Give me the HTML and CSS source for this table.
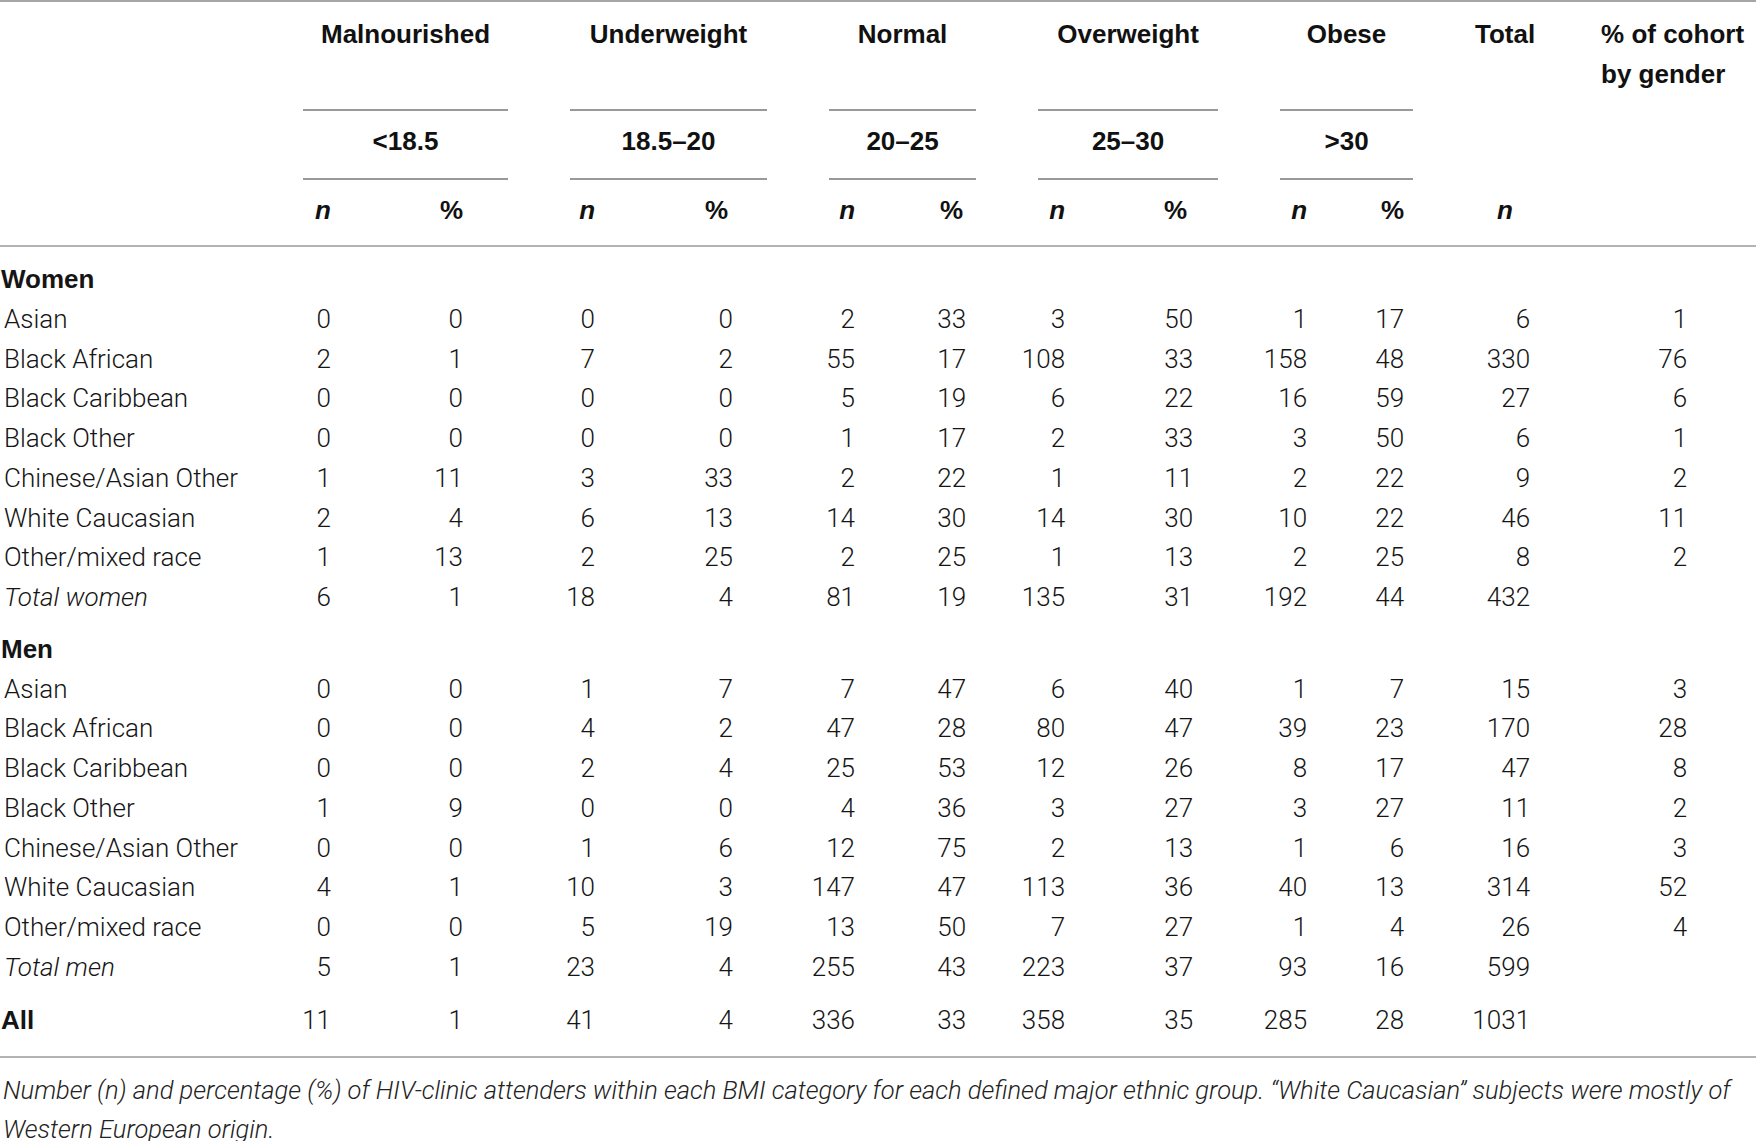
FILE: index.html
```html
<!DOCTYPE html>
<html lang="en">
  <head>
    <meta charset="UTF-8" />
    <title>BMI by ethnic group</title>
    <link rel="stylesheet" href="styles.css">
  </head>
  <body>
    <table class="bmi">
      <colgroup>
        <col class="w-label" />
        <col class="w-90" /><col class="w-177" />
        <col class="w-87" /><col class="w-172" />
        <col class="w-88" /><col class="w-121" />
        <col class="w-89" /><col class="w-153" />
        <col class="w-89" /><col class="w-106" />
        <col class="w-122" /><col class="w-190" />
      </colgroup>
      <thead>
        <tr class="cat">
          <th></th>
          <th colspan="2">Malnourished</th>
          <th colspan="2">Underweight</th>
          <th colspan="2">Normal</th>
          <th colspan="2">Overweight</th>
          <th colspan="2">Obese</th>
          <th>Total</th>
          <th class="cohort">% of cohort<br />by gender</th>
        </tr>
        <tr class="range">
          <th></th>
          <th colspan="2"><div>&lt;18.5</div></th>
          <th colspan="2"><div>18.5–20</div></th>
          <th colspan="2"><div>20–25</div></th>
          <th colspan="2"><div>25–30</div></th>
          <th colspan="2"><div>&gt;30</div></th>
          <th></th>
          <th></th>
        </tr>
        <tr class="unit">
          <th></th>
          <th class="n">n</th><th class="pc">%</th>
          <th class="n">n</th><th class="pc pc-und">%</th>
          <th class="n">n</th><th class="pc pc-norm">%</th>
          <th class="n">n</th><th class="pc pc-over">%</th>
          <th class="n">n</th><th class="pc">%</th>
          <th class="tot">n</th>
          <th></th>
        </tr>
      </thead>
      <tbody>
        <tr class="group first"><td colspan="13">Women</td></tr>
        <tr><td>Asian</td><td>0</td><td>0</td><td>0</td><td>0</td><td>2</td><td>33</td><td>3</td><td>50</td><td>1</td><td>17</td><td>6</td><td>1</td></tr>
        <tr><td>Black African</td><td>2</td><td>1</td><td>7</td><td>2</td><td>55</td><td>17</td><td>108</td><td>33</td><td>158</td><td>48</td><td>330</td><td>76</td></tr>
        <tr><td>Black Caribbean</td><td>0</td><td>0</td><td>0</td><td>0</td><td>5</td><td>19</td><td>6</td><td>22</td><td>16</td><td>59</td><td>27</td><td>6</td></tr>
        <tr><td>Black Other</td><td>0</td><td>0</td><td>0</td><td>0</td><td>1</td><td>17</td><td>2</td><td>33</td><td>3</td><td>50</td><td>6</td><td>1</td></tr>
        <tr><td>Chinese/Asian Other</td><td>1</td><td>11</td><td>3</td><td>33</td><td>2</td><td>22</td><td>1</td><td>11</td><td>2</td><td>22</td><td>9</td><td>2</td></tr>
        <tr><td>White Caucasian</td><td>2</td><td>4</td><td>6</td><td>13</td><td>14</td><td>30</td><td>14</td><td>30</td><td>10</td><td>22</td><td>46</td><td>11</td></tr>
        <tr><td>Other/mixed race</td><td>1</td><td>13</td><td>2</td><td>25</td><td>2</td><td>25</td><td>1</td><td>13</td><td>2</td><td>25</td><td>8</td><td>2</td></tr>
        <tr class="total"><td>Total women</td><td>6</td><td>1</td><td>18</td><td>4</td><td>81</td><td>19</td><td>135</td><td>31</td><td>192</td><td>44</td><td>432</td><td></td></tr>

        <tr class="group"><td colspan="13">Men</td></tr>
        <tr><td>Asian</td><td>0</td><td>0</td><td>1</td><td>7</td><td>7</td><td>47</td><td>6</td><td>40</td><td>1</td><td>7</td><td>15</td><td>3</td></tr>
        <tr><td>Black African</td><td>0</td><td>0</td><td>4</td><td>2</td><td>47</td><td>28</td><td>80</td><td>47</td><td>39</td><td>23</td><td>170</td><td>28</td></tr>
        <tr><td>Black Caribbean</td><td>0</td><td>0</td><td>2</td><td>4</td><td>25</td><td>53</td><td>12</td><td>26</td><td>8</td><td>17</td><td>47</td><td>8</td></tr>
        <tr><td>Black Other</td><td>1</td><td>9</td><td>0</td><td>0</td><td>4</td><td>36</td><td>3</td><td>27</td><td>3</td><td>27</td><td>11</td><td>2</td></tr>
        <tr><td>Chinese/Asian Other</td><td>0</td><td>0</td><td>1</td><td>6</td><td>12</td><td>75</td><td>2</td><td>13</td><td>1</td><td>6</td><td>16</td><td>3</td></tr>
        <tr><td>White Caucasian</td><td>4</td><td>1</td><td>10</td><td>3</td><td>147</td><td>47</td><td>113</td><td>36</td><td>40</td><td>13</td><td>314</td><td>52</td></tr>
        <tr><td>Other/mixed race</td><td>0</td><td>0</td><td>5</td><td>19</td><td>13</td><td>50</td><td>7</td><td>27</td><td>1</td><td>4</td><td>26</td><td>4</td></tr>
        <tr class="total"><td>Total men</td><td>5</td><td>1</td><td>23</td><td>4</td><td>255</td><td>43</td><td>223</td><td>37</td><td>93</td><td>16</td><td>599</td><td></td></tr>

        <tr class="all"><td>All</td><td>11</td><td>1</td><td>41</td><td>4</td><td>336</td><td>33</td><td>358</td><td>35</td><td>285</td><td>28</td><td>1031</td><td></td></tr>
      </tbody>
    </table>

    <p class="caption">
      Number (n) and percentage (%) of HIV-clinic attenders within each BMI category for each defined major ethnic group. “White Caucasian” subjects were mostly of Western European origin.
    </p>
  </body>
</html>
```

FILE: styles.css
```css
body {
  margin: 0;
  background: #fff;
  color: #151515;
  font-family: Roboto, "Liberation Sans", Arial, sans-serif;
}

.bmi {
  width: 1756px;
  table-layout: fixed;
  border-collapse: separate;
  border-spacing: 0;
  border-top: 2px solid #a6a6a6;
  border-bottom: 2px solid #b3b3b3;
  font-size: 26px;
  font-weight: 300;
}

.w-label { width: 272px; }
.w-87 { width: 87px; }
.w-88 { width: 88px; }
.w-89 { width: 89px; }
.w-90 { width: 90px; }
.w-106 { width: 106px; }
.w-121 { width: 121px; }
.w-122 { width: 122px; }
.w-153 { width: 153px; }
.w-172 { width: 172px; }
.w-177 { width: 177px; }
.w-190 { width: 190px; }

/* header */
.bmi th {
  padding: 0;
  font-family: "Liberation Sans", Arial, sans-serif;
  font-weight: 700;
  color: #111;
  line-height: 40px;
}

.cat th {
  height: 95px;
  vertical-align: top;
  padding-top: 12px;
  text-align: center;
}

.cat .cohort {
  text-align: left;
  padding-left: 35px;
}

.range th {
  padding: 0 31px;
  vertical-align: top;
}

.range div {
  border-top: 2px solid #999;
  border-bottom: 2px solid #999;
  line-height: 60px;
  padding-bottom: 7px;
  text-align: center;
}

.unit th {
  padding-top: 10px;
  padding-bottom: 15px;
  border-bottom: 2px solid #b3b3b3;
  text-align: right;
}

.unit .n {
  font-style: italic;
}

.unit .tot {
  font-style: italic;
  text-align: center;
}

/* body */
.bmi td {
  padding: 0;
  line-height: 39.75px;
  text-align: right;
  white-space: nowrap;
}

.bmi td:first-child {
  text-align: left;
  padding-left: 4px;
}

.bmi tr > :nth-child(2),
.bmi tr > :nth-child(4),
.bmi tr > :nth-child(6),
.bmi tr > :nth-child(8),
.bmi tr > :nth-child(10) {
  padding-right: 31px;
}

.bmi tr > :nth-child(3) { padding-right: 76px; }
.bmi tr > :nth-child(5) { padding-right: 65px; }
.bmi tr > :nth-child(7) { padding-right: 41px; }
.bmi tr > :nth-child(9) { padding-right: 56px; }
.bmi tr > :nth-child(11) { padding-right: 40px; }
.bmi td:nth-child(12) { padding-right: 36px; }
.bmi td:nth-child(13) { padding-right: 69px; }

.bmi .unit .pc-und { padding-right: 70px; }
.bmi .unit .pc-norm { padding-right: 44px; }
.bmi .unit .pc-over { padding-right: 62px; }

.bmi .range th,
.bmi .cat th {
  padding-right: 0;
}

.bmi .range th {
  padding-right: 31px;
}

.bmi .group td {
  padding-left: 1px;
  padding-top: 12px;
  font-family: "Liberation Sans", Arial, sans-serif;
  font-weight: 700;
}

.bmi .group.first td {
  padding-top: 13px;
}

.bmi .total td:first-child {
  font-style: italic;
}

.bmi .all td {
  padding-top: 13px;
  padding-bottom: 16px;
}

.bmi .all td:first-child {
  padding-left: 1px;
  font-family: "Liberation Sans", Arial, sans-serif;
  font-weight: 700;
}

.caption {
  margin: 13px 0 0;
  padding-left: 3px;
  width: 1753px;
  font-size: 25.5px;
  font-weight: 300;
  font-style: italic;
  line-height: 39px;
  color: #222;
}
```
